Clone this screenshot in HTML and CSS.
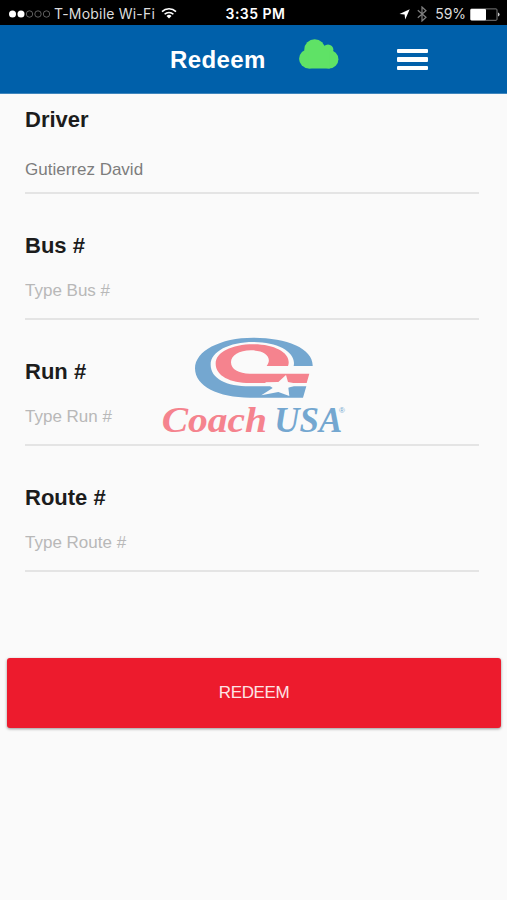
FILE: index.html
```
<!DOCTYPE html>
<html>
<head>
    <meta charset="utf-8">
    <title>Redeem</title>
    <link rel="stylesheet" href="styles.css">
</head>
<body>
    <div class="status">
        <div class="status-left">
            <svg class="signal" width="43" height="10" viewBox="0 0 43 10">
                <circle cx="4.5" cy="5" r="3.5" fill="#fff"/>
                <circle cx="13" cy="5" r="3.5" fill="#fff"/>
                <g fill="none" stroke="#777" stroke-width="0.8">
                    <circle cx="21.5" cy="5" r="3.2"/>
                    <circle cx="30" cy="5" r="3.2"/>
                    <circle cx="38.5" cy="5" r="3.2"/>
                </g>
            </svg>
            <span class="carrier">T-Mobile Wi-Fi</span>
            <svg class="wifi" width="16" height="12" viewBox="0 0 16 12">
                <g fill="none" stroke="#fff" stroke-width="1.6">
                    <path d="M1 4.6a10 10 0 0 1 14 0"/>
                    <path d="M3.6 7.3a6.3 6.3 0 0 1 8.8 0"/>
                </g>
                <path d="M5.5 9a3.6 3.6 0 0 1 5 0L8 11.6z" fill="#fff"/>
            </svg>
        </div>
        <div class="time">3:35 PM</div>
        <div class="status-right">
            <svg width="11" height="11" viewBox="0 0 11 11">
                <path d="M10.7 0.3L6.2 10.5 5.6 5.6 0.5 4.9z" fill="#fff"/>
            </svg>
            <svg class="bluetooth" width="10" height="16" viewBox="0 0 10 16">
                <path d="M0.8 4.2l8.2 7-4 3.8V1l4 3.8-8.2 7" fill="none" stroke="#808080" stroke-width="1.2"/>
            </svg>
            <span class="percent">59%</span>
            <svg class="battery" width="30" height="13" viewBox="0 0 30 13">
                <rect x="0.5" y="0.9" width="26.5" height="11.4" rx="1" fill="none" stroke="#888" stroke-width="0.9"/>
                <rect x="0.5" y="0.9" width="15.5" height="11.4" rx="1" fill="#fff"/>
                <path d="M28 4.6q1.6 0.3 1.6 2t-1.6 2z" fill="#ccc"/>
            </svg>
        </div>
    </div>

    <header class="header">
        <h1>Redeem</h1>
        <svg class="cloud" width="40" height="30" viewBox="0 0 40 30">
            <g fill="#5fe266">
                <circle cx="9.7" cy="19.8" r="9.6"/>
                <circle cx="15.7" cy="10.6" r="10.4"/>
                <circle cx="29" cy="10.8" r="5.4"/>
                <circle cx="30.2" cy="20.3" r="9.2"/>
                <rect x="9.7" y="12" width="21" height="17.5"/>
            </g>
        </svg>
        <div class="menu">
            <span></span>
            <span></span>
            <span></span>
        </div>
    </header>

    <form class="form">
        <svg class="logo" width="210" height="120" viewBox="0 0 630 360">
            <path fill="#74a7d0" d="M488 123C490 70 410 38 310 38C210 38 135 78 135 130C135 184 205 218 300 218H459L469 184H300C228 184 182 160 182 119C182 79 238 51 310 51C385 51 440 82 431 123Z"/>
            <path fill="#f5838e" d="M478 146L470 174H300C240 174 197 152 197 116C197 82 245 58 310 58C380 58 427 88 414 123H350C368 99 348 76 303 76C267 76 243 91 243 112C243 133 266 146 300 146Z"/>
            <path fill="#fafafa" d="M408 150L414 171L449 178L415 188L418 213L385 201L334 211L368 189L345 172L385 171Z"/>
            <g class="logo-text">
                <text x="35" y="320" fill="#f5838e" textLength="316" lengthAdjust="spacingAndGlyphs">Coach</text>
                <text x="373" y="320" fill="#74a7d0" textLength="204" lengthAdjust="spacingAndGlyphs">USA</text>
            </g>
            <text class="logo-reg" x="567" y="264" fill="#74a7d0">®</text>
        </svg>

        <div class="field">
            <label>Driver</label>
            <div class="value driver">Gutierrez David</div>
        </div>
        <div class="field">
            <label for="bus">Bus #</label>
            <input class="value" type="text" id="bus" placeholder="Type Bus #">
        </div>
        <div class="field">
            <label for="run">Run #</label>
            <input class="value" type="text" id="run" placeholder="Type Run #">
        </div>
        <div class="field">
            <label for="route">Route #</label>
            <input class="value" type="text" id="route" placeholder="Type Route #">
        </div>
        <button class="redeem" type="button">REDEEM</button>
    </form>
</body>
</html>
```

FILE: styles.css
```
* {
    box-sizing: border-box;
}
body {
    margin: 0;
    min-height: 900px;
    background: #fafafa;
    font-family: "Liberation Sans", Arial, sans-serif;
}
svg {
    display: block;
    flex: none;
}

/* status bar */
.status {
    display: grid;
    grid-template-columns: 1fr auto 1fr;
    align-items: center;
    height: 25px;
    padding: 3px 7px 0 8px;
    background: #000;
    color: #fff;
    font-family: Inter, sans-serif;
    font-size: 14px;
    line-height: 20px;
    white-space: nowrap;
}
.status-left,
.status-right {
    display: flex;
    align-items: center;
}
.status-right {
    justify-content: flex-end;
}
.carrier {
    margin-left: 3px;
    color: #ddd;
    letter-spacing: 0.2px;
}
.wifi {
    margin-left: 6px;
    margin-bottom: 2px;
}
.time {
    padding-left: 3px;
    font-weight: 600;
    letter-spacing: 0.5px;
}
.bluetooth {
    margin-left: 7px;
}
.percent {
    margin-left: 8px;
    color: #ddd;
    letter-spacing: -0.1px;
}
.battery {
    margin-left: 4px;
}

/* header */
.header {
    display: flex;
    align-items: center;
    height: 69px;
    padding: 1px 0 0 170px;
    background: #0060aa;
    border-bottom: 1px solid #3f86bd;
    color: #fff;
}
.header h1 {
    width: 129px;
    margin: 0;
    padding-top: 1px;
    font-size: 24px;
    line-height: 28px;
    letter-spacing: 0.4px;
}
.cloud {
    margin-bottom: 12px;
}
.menu {
    display: flex;
    flex-direction: column;
    gap: 4px;
    margin-left: 58px;
}
.menu span {
    width: 31px;
    height: 4.5px;
    border-radius: 1px;
    background: #fff;
}

/* form */
.form {
    position: relative;
}
.field {
    height: 126px;
    padding: 12px 28px 0 25px;
}
.field label {
    display: block;
    color: #1c1c1c;
    font-size: 22px;
    font-weight: bold;
    line-height: 28px;
}
.value {
    display: block;
    width: 100%;
    height: 60px;
    margin: 0;
    padding: 4px 0 0;
    border: 0;
    border-bottom: 2px solid #e4e4e4;
    outline: 0;
    background: transparent;
    color: #7d7d7d;
    font-family: inherit;
    font-size: 17px;
}
.value::placeholder {
    color: #b8b8b8;
    opacity: 1;
}
.driver {
    padding: 26px 0 0;
    line-height: 20px;
}
.redeem {
    display: block;
    width: 494px;
    height: 70px;
    margin: 60px 0 0 7px;
    padding: 0;
    border: 0;
    border-radius: 3px;
    background: #ed1b2d;
    box-shadow: 0 1px 3px rgba(0, 0, 0, 0.4);
    color: #fde3e5;
    font-family: inherit;
    font-size: 17px;
    letter-spacing: -0.4px;
}

/* watermark behind the fields */
.logo {
    position: absolute;
    top: 231px;
    left: 150px;
    pointer-events: none;
}
.logo-text {
    font-family: "Liberation Serif", "Times New Roman", serif;
    font-size: 106px;
    font-style: italic;
    font-weight: bold;
}
.logo-reg {
    font-family: "Liberation Sans", Arial, sans-serif;
    font-size: 24px;
}
```
